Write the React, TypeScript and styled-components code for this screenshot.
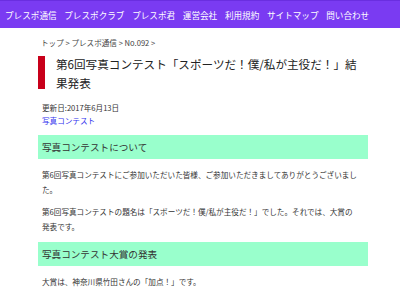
import React from 'react';
import styled, { createGlobalStyle } from 'styled-components';

const GlobalStyle = createGlobalStyle`
  body {
    margin: 0;
    background: #ffffff;
    font-family: "Noto Sans CJK JP", "Noto Sans", sans-serif;
    color: #333333;
  }
`;

const navItems = ['プレスポ通信', 'プレスポクラブ', 'プレスポ君', '運営会社', '利用規約', 'サイトマップ', '問い合わせ'];

const App: React.FC = () => {
  return (
    <>
      <GlobalStyle />
      <NavBar>
        {navItems.map(item => (
          <NavLink key={item}>{item}</NavLink>
        ))}
      </NavBar>
      <Main>
        <Breadcrumb>トップ &gt; プレスポ通信 &gt; No.092 &gt;</Breadcrumb>
        <Title>第6回写真コンテスト「スポーツだ！僕/私が主役だ！」結果発表</Title>
        <Meta>更新日:2017年6月13日</Meta>
        <Category>写真コンテスト</Category>
        <SectionHeading>写真コンテストについて</SectionHeading>
        <Paragraph>第6回写真コンテストにご参加いただいた皆様、ご参加いただきましてありがとうございました。</Paragraph>
        <Paragraph>第6回写真コンテストの題名は「スポーツだ！僕/私が主役だ！」でした。それでは、大賞の発表です。</Paragraph>
        <SectionHeading>写真コンテスト大賞の発表</SectionHeading>
        <Paragraph>大賞は、神奈川県竹田さんの「加点！」です。</Paragraph>
      </Main>
    </>
  );
};

const NavBar = styled.nav`
  display: flex;
  align-items: center;
  gap: 7.7px;
  height: 27px;
  padding-left: 5px;
  background-color: #7a3bf2;
  border-top: 1px solid #6a2ee0;
`;

const NavLink = styled.span`
  font-size: 8.6px;
  color: #ffffff;
  white-space: nowrap;
  line-height: 1;
  margin-top: 1px;
`;

const Main = styled.main`
  width: 330px;
  margin-left: 38px;
  padding-top: 9px;
`;

const Breadcrumb = styled.div`
  padding-left: 3px;
  font-size: 7.6px;
  line-height: 12px;
  color: #444444;
`;

const Title = styled.h1`
  position: relative;
  margin: 6px 0 0;
  padding-left: 18px;
  font-size: 11.6px;
  font-weight: normal;
  line-height: 19px;
  color: #222222;

  &::before {
    content: '';
    position: absolute;
    left: 0;
    top: 1px;
    bottom: 4px;
    width: 7px;
    background-color: #c8001a;
  }
`;

const Meta = styled.div`
  margin-top: 8px;
  padding-left: 4px;
  font-size: 7.6px;
  line-height: 13px;
  color: #333333;
`;

const Category = styled.a`
  display: block;
  padding-left: 4px;
  font-size: 7.6px;
  line-height: 13px;
  color: #3333ee;
  text-decoration: none;
`;

const SectionHeading = styled.h2`
  margin: 8px 0 0;
  height: 24px;
  padding-left: 4px;
  display: flex;
  align-items: center;
  background-color: #99ffcc;
  font-size: 9.6px;
  font-weight: normal;
  color: #333333;
`;

const Paragraph = styled.p`
  margin: 7.5px 0 0;
  padding: 0 9px 0 4px;
  font-size: 7.6px;
  line-height: 15px;
  color: #333333;
`;

export default App;
